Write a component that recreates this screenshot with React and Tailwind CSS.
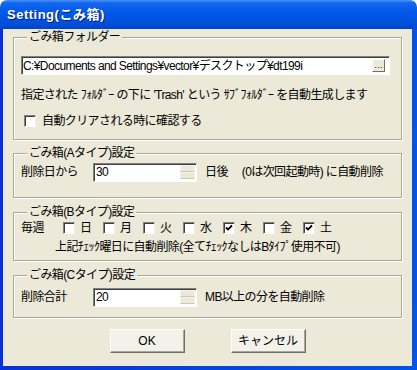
import React from "react";

const FONT = "font-['Liberation_Sans','Noto_Sans_CJK_JP',sans-serif]";

function Check({ checked }) {
  return (
    <span className="inline-flex h-[12px] w-[12px] shrink-0 items-center justify-center border border-t-[#808080] border-l-[#808080] border-b-white border-r-[#f1efe2] bg-white shadow-[inset_1px_1px_0_#404040]">
      {checked && (
        <svg width="8" height="8" viewBox="0 0 8 8">
          <path d="M1 3.5 L3 5.5 L7 1.5" stroke="#000" strokeWidth="1.8" fill="none" />
        </svg>
      )}
    </span>
  );
}

function Group({ title, className, children }) {
  return (
    <fieldset
      className={
        "mx-[10px] border border-[#aca899] shadow-[inset_1px_1px_0_#fff,1px_1px_0_#fff] " +
        className
      }
    >
      <legend className="ml-[6px] bg-[#ece9d8] px-[2px] text-[12px] leading-[16px]">{title}</legend>
      {children}
    </fieldset>
  );
}

function Spin({ value }) {
  return (
    <div className="flex h-[19px] w-[104px] shrink-0 items-center border border-t-[#808080] border-l-[#808080] border-b-white border-r-white bg-white shadow-[inset_1px_1px_0_#404040]">
      <span className="flex-1 pl-[2px] text-[12px] leading-[16px]">{value}</span>
      <div className="mr-[1px] flex h-[14px] w-[15px] flex-col">
        <span className="flex-1 border border-[#f4f3ee] border-b-[#c9c7ba] bg-[#ece9d8]" />
        <span className="flex-1 border border-[#f4f3ee] border-b-[#c9c7ba] bg-[#ece9d8]" />
      </div>
    </div>
  );
}

function Button({ children }) {
  return (
    <button className="h-[24px] w-[75px] border border-t-white border-l-white border-r-[#716f64] border-b-[#716f64] bg-[#f2f1ea] text-[12px] leading-[16px] shadow-[inset_-1px_-1px_0_#aca899]">
      {children}
    </button>
  );
}

const days = [
  ["日", false],
  ["月", false],
  ["火", false],
  ["水", false],
  ["木", true],
  ["金", false],
  ["土", true],
];

export default function App() {
  return (
    <div className={"flex h-[370px] w-[417px] flex-col overflow-hidden whitespace-nowrap bg-white text-[12px] text-black " + FONT}>
      <div className="flex h-[29px] shrink-0 items-center rounded-t-[7px] bg-[linear-gradient(180deg,#4a95f8_0%,#1466ee_10%,#0058e8_45%,#0050dc_80%,#0044c8_100%)] pl-[7px]">
        <span className="text-[13px] font-bold leading-none tracking-[0.5px] text-white [text-shadow:1px_1px_0_#0a1e6e]">
          Setting(こみ箱)
        </span>
      </div>
      <div className="flex flex-1 bg-[linear-gradient(90deg,#0831d9,#0055ea)] pb-[4px] pl-[3px] pr-[5px]">
        <div className="flex flex-1 flex-col bg-[#ece9d8] tracking-[-0.6px]">
          <Group title="ごみ箱フォルダー" className="pb-[10px] pl-[7px] pr-[11px] pt-[11px]">
            <div className="flex h-[19px] items-center border border-t-[#808080] border-l-[#808080] border-b-white border-r-white bg-white shadow-[inset_1px_1px_0_#404040]">
              <span className="flex-1 truncate pl-[1px] leading-[16px]">
                C:¥Documents and Settings¥vector¥デスクトップ¥dt199i
              </span>
              <span className="mr-[4px] flex h-[13px] w-[13px] items-center justify-center border border-t-white border-l-white border-r-[#716f64] border-b-[#716f64] bg-[#ece9d8] text-[9px] leading-none tracking-normal">
                …
              </span>
            </div>
            <div className="mt-[12px] leading-[16px]">
              指定された ﾌｫﾙﾀﾞｰ の下に 'Trash' という ｻﾌﾞﾌｫﾙﾀﾞｰ を自動生成します
            </div>
            <div className="mt-[10px] flex items-center gap-[6px] pl-[3px] leading-[16px]">
              <Check />
              <span>自動クリアされる時に確認する</span>
            </div>
          </Group>

          <Group title="ごみ箱(Aタイプ)設定" className="mt-[5px] pb-[15px] pl-[7px] pr-[8px] pt-[1px]">
            <div className="flex h-[20px] items-center leading-[16px]">
              <span className="w-[72px]">削除日から</span>
              <Spin value="30" />
              <span className="ml-[8px]">日後</span>
              <span className="ml-[14px]">(0は次回起動時) に自動削除</span>
            </div>
          </Group>

          <Group title="ごみ箱(Bタイプ)設定" className="mt-[6px] pb-[5px] pl-[7px] pr-[8px]">
            <div className="flex h-[16px] items-center leading-[16px]">
              <span className="w-[42px]">毎週</span>
              {days.map(([d, c]) => (
                <span key={d} className="flex w-[40px] items-center gap-[5px]">
                  <Check checked={c} />
                  <span>{d}</span>
                </span>
              ))}
            </div>
            <div className="mt-[3px] pl-[34px] leading-[16px]">
              上記ﾁｪｯｸ曜日に自動削除(全てﾁｪｯｸなしはBﾀｲﾌﾟ使用不可)
            </div>
          </Group>

          <Group title="ごみ箱(Cタイプ)設定" className="mt-[6px] pb-[10px] pl-[7px] pr-[8px] pt-[4px]">
            <div className="flex h-[20px] items-center leading-[16px]">
              <span className="w-[72px]">削除合計</span>
              <Spin value="20" />
              <span className="ml-[8px]">MB以上の分を自動削除</span>
            </div>
          </Group>

          <div className="mt-[11px] flex justify-center gap-[46px] tracking-normal">
            <Button>OK</Button>
            <Button>キャンセル</Button>
          </div>
        </div>
      </div>
    </div>
  );
}
